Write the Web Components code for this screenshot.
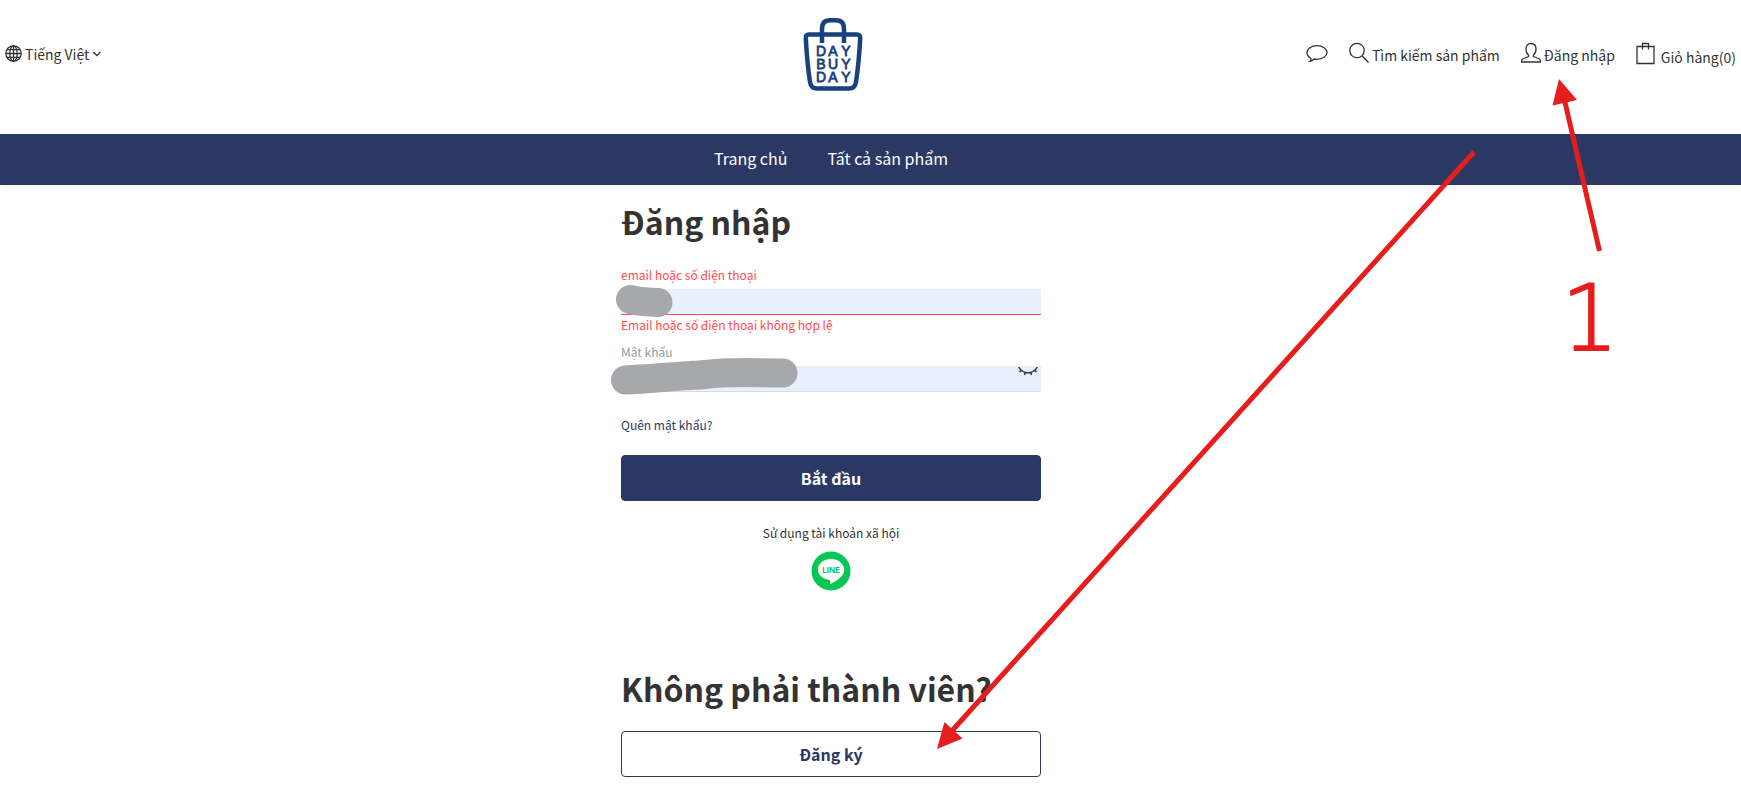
<!DOCTYPE html>
<html lang="vi">
<head>
<meta charset="utf-8">
<meta name="viewport" content="width=device-width, initial-scale=1">
<title>Đăng nhập – Day Buy Day</title>
<style>
  :root { --navy: #2b3863; --ink: #333; --error: #ff4b4f; --mark: #e71c1c; --gutter: 79px; }
  body { margin: 0; background: #fff; color: var(--ink);
    font: 14px/24px "Noto Sans CJK SC", "Noto Sans", sans-serif; }
</style>
</head>
<body>
<shop-page></shop-page>

<script>
const define = (name, html, setup) => {
  const template = document.createElement('template');
  template.innerHTML = '<style>*{box-sizing:border-box}</style>' + html;
  customElements.define(name, class extends HTMLElement {
    connectedCallback() {
      if (this.shadowRoot) return;
      this.attachShadow({ mode: 'open', delegatesFocus: true }).append(template.content.cloneNode(true));
      if (setup) setup(this, this.shadowRoot);
    }
  });
};

define('shop-logo', `
  <style>
    :host { display: block; width: 60px; }
    a { display: block; }
    svg { display: block; width: 60px; height: 74px; }
    text { font: 400 14px "Liberation Sans", sans-serif; fill: #17427c; text-anchor: middle; }
  </style>
  <a href="#" aria-label="Day Buy Day">
    <svg viewBox="0 0 60 74" fill="none" stroke="#17427c" stroke-width="4.500">
      <path d="M6 17.500H54Q57.500 17.500 57.200 21C56.500 35 55 52 53 65Q52 71.500 46 71.500H14Q8 71.500 7 65C5 52 3.500 35 2.800 21Q2.500 17.500 6 17.500Z"/>
      <path d="M19 26V12Q19 3.300 27 3.300H33Q41 3.300 41 12V26"/>
      <g stroke-width=".800">
        <text x="18 30 43" y="39">DAY</text>
        <text x="18 30 43" y="52">BUY</text>
        <text x="18 30 43" y="65">DAY</text>
      </g>
    </svg>
  </a>`);

define('header-link', `
  <style>
    :host { display: block; }
    a { display: flex; align-items: center; gap: var(--gap, 3px); color: inherit; text-decoration: none; white-space: nowrap; }
    span { padding-top: var(--drop, 2px); }
  </style>
  <a href="#"><slot name="icon"></slot><span><slot></slot></span></a>`,
  (host, root) => {
    if (host.hasAttribute('label')) {
      root.querySelector('a').setAttribute('aria-label', host.getAttribute('label'));
      root.querySelector('span').remove();
    }
  });

define('site-header', `
  <style>
    :host { display: block; }
    header { display: grid; grid-template-columns: minmax(0, 1fr) 60px minmax(0, 1fr) 75px;
      padding: 17px 5px 43px; }
    svg { display: block; fill: none; stroke: #333; stroke-width: 1.3; }
    .side { display: flex; align-items: center; height: 74px; }
    .lang { display: flex; align-items: center; gap: 3px; padding: 0; border: 0; background: none;
      color: inherit; font: inherit; cursor: pointer; }
    .actions { grid-column: 3 / 5; justify-content: flex-end; gap: 21px; }
    .cart { --gap: 6px; --drop: 6px; }
  </style>
  <header>
    <div class="side">
      <button class="lang" type="button">
        <svg width="17" height="18" viewBox="0 0 17 18"><circle cx="8.500" cy="8.500" r="7.700"/><ellipse cx="8.500" cy="8.500" rx="3.700" ry="7.700"/><path d="M8.500 1V16M1 8.500H16M2 4.700H15M2 12.300H15"/></svg>
        <span>Tiếng Việt</span>
        <svg width="9" height="6" viewBox="0 0 9 6"><path d="M1 1L5 4.500L8.500 1"/></svg>
      </button>
    </div>
    <shop-logo></shop-logo>
    <nav class="side actions" aria-label="Tài khoản">
      <header-link label="Trò chuyện">
        <svg slot="icon" width="22" height="22" viewBox="0 0 22 22"><path d="M5 15.500C2.500 14 1 12 1 9.700C1 5.700 5.400 2.700 11 2.700S21 5.700 21 9.500S16.600 16.300 11 16.300C10 16.300 9 16.200 8 16C7 17.300 5.400 18.200 4 18.300C5 17.500 5.300 16.500 5 15.500Z"/></svg>
      </header-link>
      <header-link>
        <svg slot="icon" width="20" height="24" viewBox="0 0 20 24"><circle cx="8" cy="8.500" r="7.200"/><path d="M13 13.700L19.500 20.500"/></svg>
        Tìm kiếm sản phẩm
      </header-link>
      <header-link>
        <svg slot="icon" width="20" height="24" viewBox="0 0 20 24"><path d="M7.600 13.200C5.600 11.700 5 9.500 5 7C5 3.500 7 1.500 10 1.500S15 3.500 15 7C15 9.500 14.400 11.700 12.400 13.200V14.500C15 16 19.300 16.300 19.300 18.500V20H.7V18.500C.7 16.300 5 16 7.600 14.500Z"/></svg>
        Đăng nhập
      </header-link>
      <header-link class="cart">
        <svg slot="icon" width="19" height="24" viewBox="0 0 19 24" stroke-width="1.600"><path d="M1 4.500H18V21.500H1ZM6.500 7.500V1.500H12.500V7.500"/></svg>
        Giỏ hàng(0)
      </header-link>
    </nav>
  </header>`);

define('site-nav', `
  <style>
    :host { display: block; background: var(--navy); box-shadow: 0 2px 6px rgba(0, 0, 0, .06); }
    nav { display: flex; justify-content: center; gap: 40px; padding: 12px var(--gutter) 15px 0; }
    a { color: #fff; font-size: 16px; text-decoration: none; }
  </style>
  <nav aria-label="Chính"><a href="#">Trang chủ</a><a href="#">Tất cả sản phẩm</a></nav>`);

define('text-field', `
  <style>
    :host { display: block; font-size: 12px; line-height: 18px; color: #999; }
    :host([error]) { color: var(--error); --line: var(--error); }
    label { display: block; margin-bottom: 5px; }
    .box { display: flex; height: 26px; background: #e8effd; border-bottom: 1px solid var(--line, #d5dbe7); }
    input { flex: 1; min-width: 0; padding: 0 4px; border: 0; outline: 0; background: none; font: inherit; color: var(--ink); }
    p { margin: 1px 0 0; }
  </style>
  <label for="field"></label>
  <div class="box"><input id="field"><slot></slot></div>
  <p></p>`,
  (host, root) => {
    root.querySelector('label').textContent = host.getAttribute('label');
    root.querySelector('input').type = host.getAttribute('type') || 'text';
    const p = root.querySelector('p');
    if (host.hasAttribute('error')) p.textContent = host.getAttribute('error');
    else p.remove();
  });

define('wide-button', `
  <style>
    :host { display: block; }
    button { display: block; width: 100%; padding: 10px; border: 1px solid var(--navy); border-radius: 4px;
      background: var(--navy); color: #fff; font: inherit; font-size: 16px; font-weight: 700; cursor: pointer; }
    :host([outline]) button { background: #fff; color: var(--navy); }
  </style>
  <button type="button"><slot></slot></button>`);

define('line-login', `
  <style>
    :host { display: block; }
    button { display: block; padding: 0; border: 0; background: none; cursor: pointer; }
    svg { display: block; }
    text { font: 700 8px Inter, sans-serif; fill: #06c755; text-anchor: middle; }
  </style>
  <button type="button" aria-label="LINE">
    <svg width="40" height="40" viewBox="0 0 40 40">
      <circle cx="20" cy="20" r="19.500" fill="#06c755"/>
      <path fill="#fff" d="M20 8C12.700 8 6.800 12.700 6.800 18.500C6.800 23.700 11.500 28 17.800 28.800C19.500 29.200 19.400 30 19.200 32.500C19.100 33.100 19.600 33.200 20.200 32.800C23.500 31 28 28.300 30.500 25.300C32.300 23.300 33.200 21 33.200 18.500C33.200 12.700 27.300 8 20 8Z"/>
      <text x="20" y="22">LINE</text>
    </svg>
  </button>`);

define('sign-in', `
  <style>
    :host { display: block; padding: 12px var(--gutter) 18px 0; }
    .column { display: flex; flex-direction: column; width: 100%; max-width: 420px; margin: 0 auto; }
    h1, h2 { margin: 0 0 21px; font-size: 32px; line-height: 48px; font-weight: 700; }
    h2 { margin-bottom: 19px; white-space: nowrap; }
    text-field + text-field { margin-top: 9px; }
    svg { display: block; margin: 0 3px 0 0; }
    .small { font-size: 12px; line-height: 18px; }
    .forgot { align-self: flex-start; margin: 24px 0 21px; color: var(--navy); text-decoration: none; }
    .social { display: flex; flex-direction: column; align-items: center; gap: 9px; margin: 23px 0 73px; }
    .social p { margin: 0; }
  </style>
  <main class="column">
    <h1>Đăng nhập</h1>
    <text-field label="email hoặc số điện thoại" error="Email hoặc số điện thoại không hợp lệ"></text-field>
    <text-field label="Mật khẩu" type="password">
      <svg width="20" height="10" viewBox="0 0 20 10" fill="none" stroke="#333" stroke-width="1.500" aria-hidden="true"><path d="M.7 1C3 5 6.300 6.700 10 6.700S17 5 19.300 1M3.300 4.200L1.500 6M7.200 6.300L6.500 9M12.800 6.300L13.500 9M16.700 4.200L18.500 6"/></svg>
    </text-field>
    <a class="small forgot" href="#">Quên mật khẩu?</a>
    <wide-button>Bắt đầu</wide-button>
    <div class="small social"><p>Sử dụng tài khoản xã hội</p><line-login></line-login></div>
    <h2>Không phải thành viên?</h2>
    <wide-button outline>Đăng ký</wide-button>
  </main>`);

define('page-marks', `
  <style>
    :host { display: block; position: absolute; inset: 0; overflow: hidden; pointer-events: none; }
    svg { display: block; width: 100%; }
    .arrow { fill: none; stroke: var(--mark); stroke-width: 5; }
    .head { fill: var(--mark); }
    .cover { fill: none; stroke: #a7a8ac; stroke-width: 29; stroke-linecap: round; stroke-linejoin: round; }
    text { font: 200 90px "DejaVu Sans", sans-serif; fill: var(--mark); stroke: var(--mark);
      stroke-width: 2; stroke-linejoin: round; text-anchor: middle; }
  </style>
  <svg viewBox="0 0 1741 795">
    <path class="cover" d="M630.500 299.500C640 302 649 302 658 302.500"/>
    <path class="cover" d="M625.500 380C650 379 675 376 700 375C735 371 745 373 783 373"/>
    <path class="arrow" d="M1474 152L950 733M1599.500 251L1564 98"/>
    <path class="head" d="M937 749L944.500 722L962.500 738.500ZM1559 79L1577 100L1552.500 105.500Z"/>
    <text x="1590" y="350">1</text>
  </svg>`);

define('shop-page', `
  <style>:host { display: block; position: relative; }</style>
  <site-header></site-header>
  <site-nav></site-nav>
  <sign-in></sign-in>
  <page-marks></page-marks>`);
</script>
</body>
</html>
